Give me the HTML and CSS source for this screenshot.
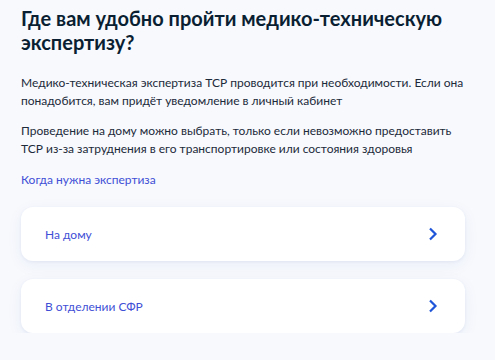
FILE: index.html
```html
<!DOCTYPE html>
<html lang="ru">
<head>
<meta charset="utf-8">
<link rel="stylesheet" href="styles.css">
</head>
<body>
<main class="page">
  <h1 class="title">Где вам удобно пройти медико-техническую экспертизу?</h1>
  <p class="text">Медико-техническая экспертиза ТСР проводится при необходимости. Если она понадобится, вам придёт уведомление в личный кабинет</p>
  <p class="text">Проведение на дому можно выбрать, только если невозможно предоставить ТСР из-за затруднения в его транспортировке или состояния здоровья</p>
  <a class="link" href="#">Когда нужна экспертиза</a>
  <div class="options">
    <a class="card" href="#">
      <span class="card-label">На дому</span>
      <svg class="chev" width="10" height="14" viewBox="0 0 10 14"><path d="M2 1.5 L7.5 7 L2 12.5" fill="none" stroke="#1f55d8" stroke-width="2.2"/></svg>
    </a>
    <a class="card" href="#">
      <span class="card-label">В отделении СФР</span>
      <svg class="chev" width="10" height="14" viewBox="0 0 10 14"><path d="M2 1.5 L7.5 7 L2 12.5" fill="none" stroke="#1f55d8" stroke-width="2.2"/></svg>
    </a>
  </div>
</main>
</body>
</html>
```
FILE: styles.css
```css
html, body {
  margin: 0;
  padding: 0;
  background: #f7f9fd;
}
body {
  font-family: Lato, "Noto Sans", sans-serif;
  color: #0b1f33;
}
.page {
  padding: 6px 30px 0 21px;
  display: flex;
  flex-direction: column;
}
.title {
  margin: 0 0 20px;
  font-size: 20px;
  line-height: 24px;
  font-weight: 700;
  color: #0b1f33;
}
.text {
  margin: 0 0 12px;
  font-size: 12px;
  line-height: 18px;
  color: #1c2a3a;
}
.link {
  margin-top: 1px;
  font-size: 12px;
  line-height: 18px;
  color: #3f4fd6;
  text-decoration: none;
  align-self: flex-start;
}
.options {
  margin-top: 18px;
  display: flex;
  flex-direction: column;
  gap: 18px;
}
.card {
  height: 54px;
  box-sizing: border-box;
  padding: 0 27px 0 24px;
  display: flex;
  align-items: center;
  justify-content: space-between;
  background: #fff;
  border-radius: 12px;
  box-shadow: 0 1px 3px rgba(40, 70, 160, 0.07), 0 4px 16px rgba(40, 70, 160, 0.06);
  text-decoration: none;
}
.card-label {
  font-size: 12px;
  color: #3f4fd6;
}
.chev {
  display: block;
}
```
